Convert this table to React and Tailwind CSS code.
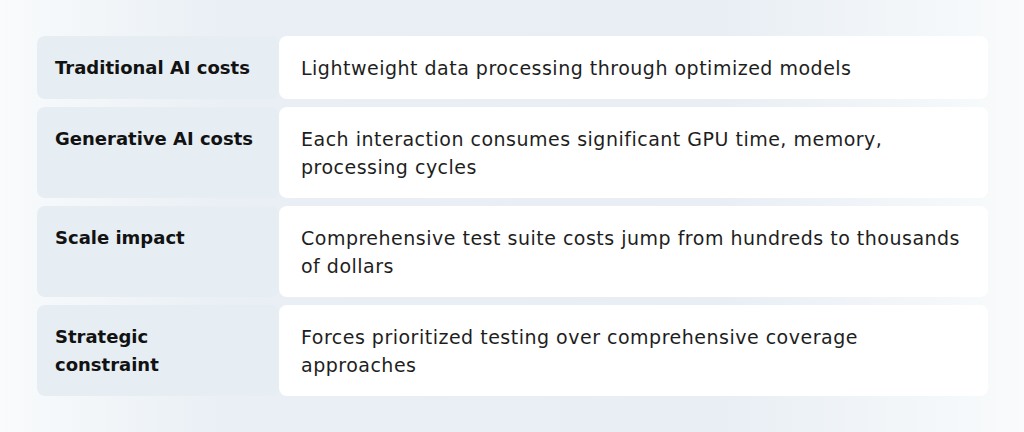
const rows = [
  {
    label: ["Traditional AI costs"],
    text: ["Lightweight data processing through optimized models"],
  },
  {
    label: ["Generative AI costs"],
    text: [
      "Each interaction consumes significant GPU time, memory,",
      "processing cycles",
    ],
  },
  {
    label: ["Scale impact"],
    text: [
      "Comprehensive test suite costs jump from hundreds to thousands",
      "of dollars",
    ],
  },
  {
    label: ["Strategic", "constraint"],
    text: [
      "Forces prioritized testing over comprehensive coverage",
      "approaches",
    ],
  },
];

export default function App() {
  return (
    <div
      className="w-[1024px] h-[432px] overflow-hidden bg-[linear-gradient(90deg,#f9fbfc_0%,#e9eff5_22%,#e8eef4_70%,#f9fbfc_100%)] pl-[37px] pr-[36px] pt-9"
      style={{ fontFamily: '"DejaVu Sans", "Liberation Sans", sans-serif' }}
    >
      <div className="flex flex-col gap-2">
        {rows.map((row) => (
          <div key={row.label.join(" ")} className="grid grid-cols-[242px_1fr]">
            <div className="bg-[#e6edf3] rounded-lg pl-[18px] pr-2 py-[17.5px] text-[18px] leading-7 font-bold text-[#121212] whitespace-nowrap">
              {row.label.map((line) => (
                <div key={line}>{line}</div>
              ))}
            </div>
            <div className="bg-white rounded-lg pl-[22px] pr-4 py-[17.5px] text-[19px] tracking-[0.5px] leading-7 text-[#1e1e1e] whitespace-nowrap">
              {row.text.map((line) => (
                <div key={line}>{line}</div>
              ))}
            </div>
          </div>
        ))}
      </div>
    </div>
  );
}
